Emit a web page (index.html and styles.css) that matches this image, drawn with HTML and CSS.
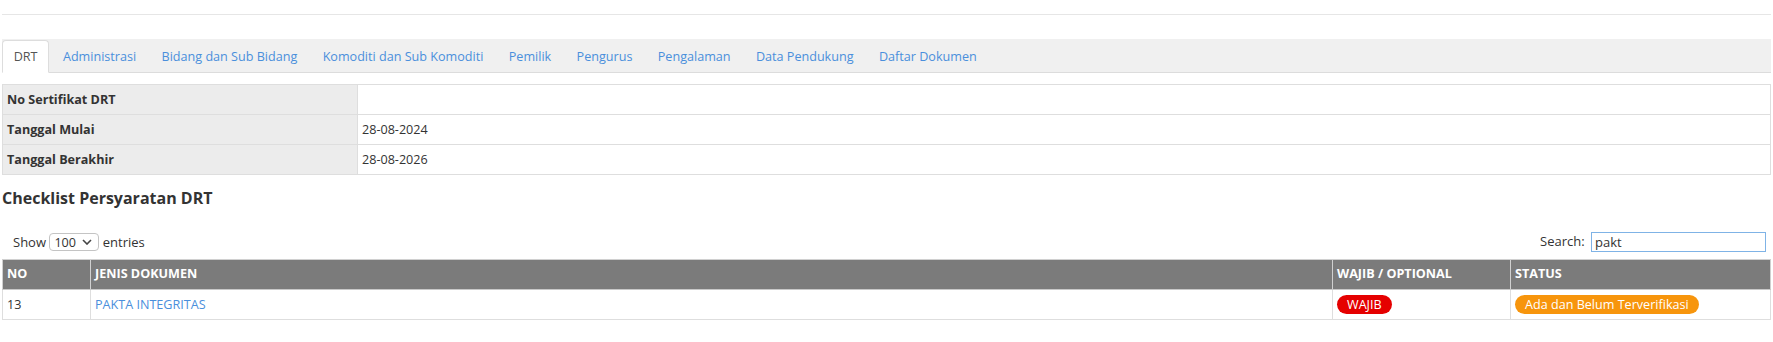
FILE: index.html
```html
<!DOCTYPE html>
<html lang="id">
<head>
    <meta charset="UTF-8">
    <meta name="viewport" content="width=device-width, initial-scale=1.0">
    <title>Detail DRT</title>
    <link rel="stylesheet" href="styles.css">
</head>
<body>
    <div class="page">
        <div class="top-line"></div>

        <ul class="nav-tabs">
            <li class="active"><a href="#">DRT</a></li>
            <li><a href="#">Administrasi</a></li>
            <li><a href="#">Bidang dan Sub Bidang</a></li>
            <li><a href="#">Komoditi dan Sub Komoditi</a></li>
            <li><a href="#">Pemilik</a></li>
            <li><a href="#">Pengurus</a></li>
            <li><a href="#">Pengalaman</a></li>
            <li><a href="#">Data Pendukung</a></li>
            <li><a href="#">Daftar Dokumen</a></li>
        </ul>

        <table class="detail-table">
            <tr>
                <th>No Sertifikat DRT</th>
                <td></td>
            </tr>
            <tr>
                <th>Tanggal Mulai</th>
                <td>28-08-2024</td>
            </tr>
            <tr>
                <th>Tanggal Berakhir</th>
                <td>28-08-2026</td>
            </tr>
        </table>

        <h4 class="section-title">Checklist Persyaratan DRT</h4>

        <div class="dt-toolbar">
            <label class="dt-length">Show
                <select>
                    <option>10</option>
                    <option>25</option>
                    <option>50</option>
                    <option selected>100</option>
                </select>
                entries</label>
            <label class="dt-search">Search: <input type="text" value="pakt"></label>
        </div>

        <table class="data-table">
            <colgroup>
                <col class="col-no">
                <col>
                <col class="col-wajib">
                <col class="col-status">
            </colgroup>
            <thead>
                <tr>
                    <th>NO</th>
                    <th>JENIS DOKUMEN</th>
                    <th>WAJIB / OPTIONAL</th>
                    <th>STATUS</th>
                </tr>
            </thead>
            <tbody>
                <tr>
                    <td>13</td>
                    <td><a href="#">PAKTA INTEGRITAS</a></td>
                    <td><span class="badge badge-red">WAJIB</span></td>
                    <td><span class="badge badge-orange">Ada dan Belum Terverifikasi</span></td>
                </tr>
            </tbody>
        </table>
    </div>
</body>
</html>
```

FILE: styles.css
```css
body {
    margin: 0;
    font-family: "Open Sans", "Noto Sans", sans-serif;
    font-size: 12.6px;
    line-height: 18px;
    color: #333;
    background: #fff;
}
a {
    color: #4a8fdc;
    text-decoration: none;
}
.page {
    padding: 0 2px;
}
.top-line {
    margin-top: 14px;
    border-top: 1px solid #e6e6e6;
}

/* tabs */
.nav-tabs {
    list-style: none;
    margin: 24px 0 0;
    padding: 1px 0 0;
    display: flex;
    background: #f0f0f0;
    border-bottom: 1px solid #dcdcdc;
    height: 32px;
}
.nav-tabs li {
    margin-right: 2px;
    margin-bottom: -1px;
}
.nav-tabs a {
    display: block;
    padding: 7px 10.7px 6px;
    line-height: 18px;
    border: 1px solid transparent;
    border-radius: 4px 4px 0 0;
}
.nav-tabs .active a {
    color: #555;
    background: #fff;
    border-color: #ddd;
    border-bottom-color: #fff;
}

/* detail table */
.detail-table {
    width: 100%;
    margin-top: 11px;
    border-collapse: collapse;
}
.detail-table th,
.detail-table td {
    border: 1px solid #dedede;
    padding: 5px 4px 5px;
    line-height: 19px;
    text-align: left;
}
.detail-table th {
    width: 346px;
    background: #ececec;
    font-weight: 700;
}

.section-title {
    margin: 12px 0 0;
    font-size: 16px;
    line-height: 22px;
    font-weight: 700;
}

/* datatables toolbar */
.dt-toolbar {
    display: flex;
    justify-content: space-between;
    align-items: center;
    margin-top: 23px;
    padding: 0 5px 0 11px;
    height: 20px;
    font-size: 13px;
}
.dt-length select {
    -webkit-appearance: none;
    appearance: none;
    font-family: "Open Sans", sans-serif;
    font-size: 12.6px;
    height: 18px;
    width: 50px;
    padding: 0 0 0 4px;
    border: 1px solid #c4c4c4;
    border-radius: 4px;
    color: #333;
    background: #fff url("data:image/svg+xml,%3Csvg xmlns='http://www.w3.org/2000/svg' width='10' height='6' viewBox='0 0 10 6'%3E%3Cpath d='M1 1l4 4 4-4' fill='none' stroke='%23444' stroke-width='1.6'/%3E%3C/svg%3E") no-repeat right 6px center;
}
.dt-search input {
    font-family: "Open Sans", sans-serif;
    font-size: 13px;
    width: 175px;
    height: 20px;
    box-sizing: border-box;
    padding: 0 3px;
    margin-left: 3px;
    border: 1px solid #7fb3e6;
    color: #333;
    outline: none;
    vertical-align: middle;
}

/* data table */
.data-table {
    width: 100%;
    margin-top: 7px;
    border-collapse: collapse;
    table-layout: fixed;
}
.col-no {
    width: 88px;
}
.col-wajib {
    width: 178px;
}
.col-status {
    width: 260px;
}
.data-table th {
    background: #7b7b7b;
    color: #fff;
    font-weight: 700;
    text-align: left;
    border: 1px solid #d0d0d0;
    border-bottom-color: #c8c8c8;
    padding: 5px 4px 6px;
    line-height: 18px;
}
.data-table td {
    border: 1px solid #dedede;
    padding: 5px 4px 5px;
    line-height: 19px;
}
.badge {
    display: inline-block;
    color: #fff;
    border-radius: 10px;
    line-height: 19px;
    padding: 0 10px;
}
.badge-red {
    background: #e50000;
}
.badge-orange {
    background: #f7950c;
}
```
